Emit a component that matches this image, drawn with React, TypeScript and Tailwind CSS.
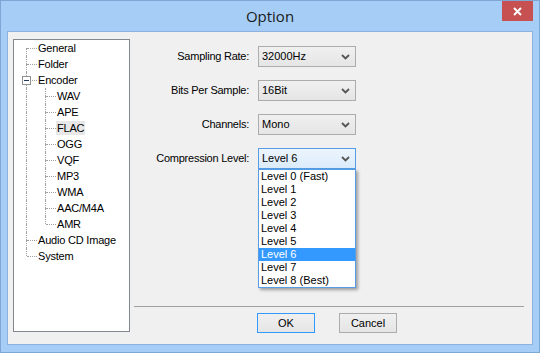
import React from "react";

const ui = "font-['Liberation_Sans',Arial,sans-serif]";

type Node = {
  label: string;
  level: 0 | 1;
  first?: boolean;
  last?: boolean;
  expander?: boolean;
  selected?: boolean;
};

const tree: Node[] = [
  { label: "General", level: 0, first: true },
  { label: "Folder", level: 0 },
  { label: "Encoder", level: 0, expander: true },
  { label: "WAV", level: 1, first: true },
  { label: "APE", level: 1 },
  { label: "FLAC", level: 1, selected: true },
  { label: "OGG", level: 1 },
  { label: "VQF", level: 1 },
  { label: "MP3", level: 1 },
  { label: "WMA", level: 1 },
  { label: "AAC/M4A", level: 1 },
  { label: "AMR", level: 1, last: true },
  { label: "Audio CD Image", level: 0 },
  { label: "System", level: 0, last: true },
];

const levels = [
  "Level 0 (Fast)",
  "Level 1",
  "Level 2",
  "Level 3",
  "Level 4",
  "Level 5",
  "Level 6",
  "Level 7",
  "Level 8 (Best)",
];

function Chevron() {
  return (
    <svg width="9" height="6" viewBox="0 0 9 6" className="shrink-0">
      <path d="M1 1 L4.5 4.5 L8 1" fill="none" stroke="#555" strokeWidth="1.8" />
    </svg>
  );
}

// one branch cell of the tree: vertical line at 12px, elbow to the right
function Branch({ top, bottom, elbow }: { top: boolean; bottom: boolean; elbow: boolean }) {
  return (
    <div className="relative w-[19px] h-[16px] shrink-0">
      {top && <div className="absolute left-[12px] top-0 h-[8px] border-l border-dotted border-[#a0a0a0]" />}
      {bottom && <div className="absolute left-[12px] top-[8px] h-[8px] border-l border-dotted border-[#a0a0a0]" />}
      {elbow && <div className="absolute left-[13px] top-[8px] w-[10px] border-t border-dotted border-[#a0a0a0]" />}
    </div>
  );
}

function TreeRow({ node }: { node: Node }) {
  return (
    <div className="flex items-center h-[16px]">
      {node.level === 1 && <Branch top bottom elbow={false} />}
      <div className="relative w-[24px] h-[16px] shrink-0">
        <Branch top={!node.first || node.level === 1} bottom={!node.last} elbow />
        {node.expander && (
          <div className="absolute left-[8px] top-[4px] w-[9px] h-[9px] border border-[#919191] bg-white flex items-center justify-center">
            <div className="w-[5px] h-[1px] bg-[#1e395b]" />
          </div>
        )}
      </div>
      <span
        className={`text-[11px] leading-[14px] tracking-[-0.2px] px-[1px] -ml-[1px] text-black ${
          node.selected ? "bg-[#e8e8e8]" : ""
        }`}
      >
        {node.label}
      </span>
    </div>
  );
}

function Combo({ value, focused }: { value: string; focused?: boolean }) {
  return (
    <div
      className={`w-[98px] h-[21px] border flex items-center justify-between pl-[3px] pr-[5px] text-[11px] text-black ${
        focused
          ? "border-[#569de5] bg-gradient-to-b from-[#ecf4fc] to-[#dcecfc]"
          : "border-[#acacac] bg-gradient-to-b from-[#f0f0f0] to-[#e5e5e5]"
      }`}
    >
      <span>{value}</span>
      <Chevron />
    </div>
  );
}

function Field({ label, children }: { label: string; children: React.ReactNode }) {
  return (
    <div className="flex items-center">
      <div className="w-[115px] text-right text-[11px] tracking-[-0.25px] text-black">{label}</div>
      <div className="ml-[9px] relative">{children}</div>
    </div>
  );
}

export default function App() {
  return (
    <div className={`${ui} w-[540px] h-[353px] bg-[#a5cdf5] border border-[#7fa7d6] flex flex-col`}>
      {/* Title bar */}
      <div className="relative h-[30px] flex items-center justify-center shrink-0">
        <span className="font-['Open_Sans',sans-serif] text-[15px] text-[#1b1b1b] mt-[1px]">Option</span>
        <div className="absolute right-[6px] top-0 w-[31px] h-[20px] bg-[#c75050] flex items-center justify-center">
          <svg width="9" height="9" viewBox="0 0 9 9">
            <path d="M1 1 L8 8 M8 1 L1 8" stroke="white" strokeWidth="2" />
          </svg>
        </div>
      </div>

      {/* Client area */}
      <div className="mx-[6px] h-[314px] bg-[#f0f0f0] border border-[#8db2e2] flex pl-[5px] pt-[7px]">
        <div className="w-[117px] h-[293px] bg-white border border-[#828790]">
          {tree.map((n) => (
            <TreeRow key={n.label} node={n} />
          ))}
        </div>

        <div className="ml-[4px] w-[390px] h-[294px] flex flex-col">
          <div className="flex flex-col gap-[13px] pt-[7px]">
            <Field label="Sampling Rate:">
              <Combo value="32000Hz" />
            </Field>
            <Field label="Bits Per Sample:">
              <Combo value="16Bit" />
            </Field>
            <Field label="Channels:">
              <Combo value="Mono" />
            </Field>
            <Field label="Compression Level:">
              <Combo value="Level 6" focused />
              <div className="absolute left-0 top-[21px] w-[98px] bg-white border border-[#569de5] shadow-[2px_2px_3px_rgba(0,0,0,0.35)] z-10">
                {levels.map((l) => (
                  <div
                    key={l}
                    className={`h-[13px] leading-[13px] pl-[2px] text-[11px] ${
                      l === "Level 6" ? "bg-[#3399ff] text-white" : "text-black"
                    }`}
                  >
                    {l}
                  </div>
                ))}
              </div>
            </Field>
          </div>

          <div className="mt-auto border-t border-[#a0a0a0] pt-[6px] flex justify-center gap-[24px] pr-[4px]">
            <button className="w-[58px] h-[20px] border border-[#3399ff] bg-gradient-to-b from-[#f0f0f0] to-[#e5e5e5] text-[11px] text-black">
              OK
            </button>
            <button className="w-[58px] h-[20px] border border-[#acacac] bg-gradient-to-b from-[#f0f0f0] to-[#e5e5e5] text-[11px] text-black">
              Cancel
            </button>
          </div>
        </div>
      </div>
    </div>
  );
}
